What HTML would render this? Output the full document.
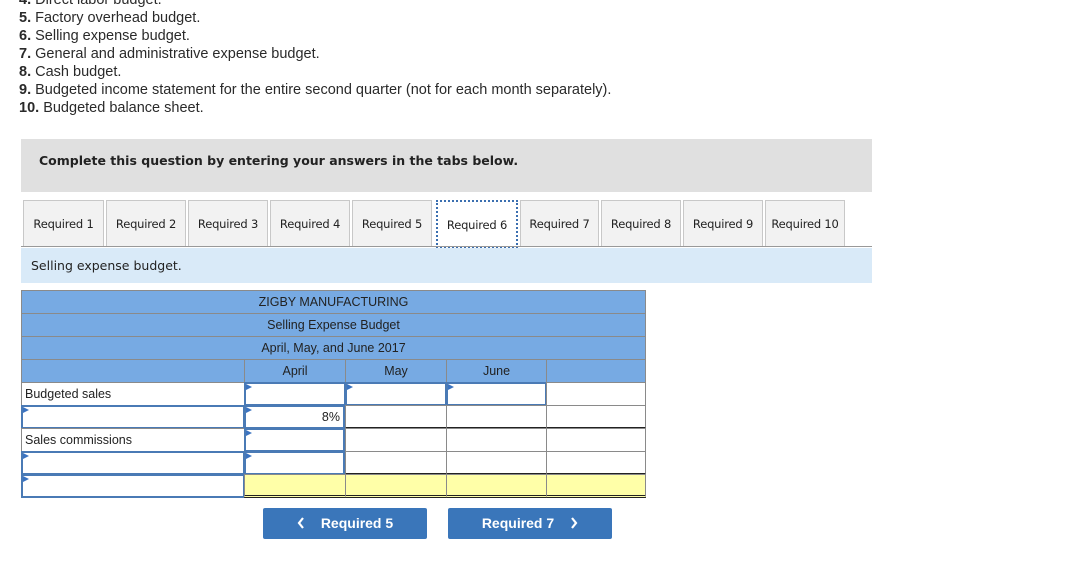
<!DOCTYPE html><html><head><style>
body{margin:0;width:1080px;height:583px;background:#fff;position:relative;overflow:hidden;font-family:"Liberation Sans",sans-serif;color:#222}
.a{position:absolute}
.ln{position:absolute;left:19px;font-size:14.5px;line-height:18px;white-space:nowrap;color:#2a2a2a}
.ln b{font-weight:bold}
.tab{position:absolute;top:200px;height:46px;background:#f2f2f2;border:1px solid #c8c8c8;border-bottom:none;font-family:"DejaVu Sans",sans-serif;font-size:11.5px;line-height:46px;text-align:center;box-sizing:border-box;letter-spacing:-0.2px}
.c{position:absolute;box-sizing:border-box;font-family:"Liberation Sans",sans-serif;font-size:12.5px}
.h{background:#77aae3;border:1px solid #8a8a8a;text-align:center;line-height:22px;color:#222}
.w{background:#fff;border:1px solid #8a8a8a}
.in{border:2px solid #4a7ab5;background:#fff}
.in:before{content:"";position:absolute;left:0;top:0;border-left:6px solid #3b73c0;border-top:3px solid transparent;border-bottom:3px solid transparent}
.y{background:#ffffa8;border:1px solid #8a8a8a;border-bottom:3px double #222}
.btn{position:absolute;top:508px;height:31px;width:164px;background:#3a76ba;border-radius:2px;color:#fff;font-weight:bold;font-size:14px;line-height:31px;text-align:center}
.btn svg{vertical-align:-1px}
</style></head><body>
<div class="ln" style="top:-9px"><b>4.</b> Direct labor budget.</div>
<div class="ln" style="top:9px"><b>5.</b> Factory overhead budget.</div>
<div class="ln" style="top:27px"><b>6.</b> Selling expense budget.</div>
<div class="ln" style="top:45px"><b>7.</b> General and administrative expense budget.</div>
<div class="ln" style="top:63px"><b>8.</b> Cash budget.</div>
<div class="ln" style="top:81px"><b>9.</b> Budgeted income statement for the entire second quarter (not for each month separately).</div>
<div class="ln" style="top:99px"><b>10.</b> Budgeted balance sheet.</div>

<div class="a" style="left:21px;top:139px;width:851px;height:53px;background:#e0e0e0"></div>
<div class="a" style="left:39px;top:153px;font-family:'DejaVu Sans',sans-serif;font-weight:bold;font-size:12.5px">Complete this question by entering your answers in the tabs below.</div>

<div class="tab" style="left:23px;width:81px">Required 1</div>
<div class="tab" style="left:106px;width:80px">Required 2</div>
<div class="tab" style="left:188px;width:80px">Required 3</div>
<div class="tab" style="left:270px;width:80px">Required 4</div>
<div class="tab" style="left:352px;width:80px">Required 5</div>
<div class="tab" style="left:436px;width:82px;background:#fff;border:2px dotted #3b6fb0;height:48px;line-height:46px">Required 6</div>
<div class="tab" style="left:520px;width:79px">Required 7</div>
<div class="tab" style="left:601px;width:80px">Required 8</div>
<div class="tab" style="left:683px;width:80px">Required 9</div>
<div class="tab" style="left:765px;width:80px">Required 10</div>
<div class="a" style="left:21px;top:246px;width:851px;height:1px;background:#999"></div>
<div class="a" style="left:21px;top:248px;width:851px;height:35px;background:#d9eaf8"></div>
<div class="a" style="left:31px;top:258px;font-family:'DejaVu Sans',sans-serif;font-size:12.5px">Selling expense budget.</div>

<div class="c h" style="left:21px;top:290px;width:625px;height:24px">ZIGBY MANUFACTURING</div>
<div class="c h" style="left:21px;top:313px;width:625px;height:24px">Selling Expense Budget</div>
<div class="c h" style="left:21px;top:336px;width:625px;height:24px">April, May, and June 2017</div>
<div class="c h" style="left:21px;top:359px;width:224px;height:24px"></div>
<div class="c h" style="left:244px;top:359px;width:102px;height:24px">April</div>
<div class="c h" style="left:345px;top:359px;width:102px;height:24px">May</div>
<div class="c h" style="left:446px;top:359px;width:101px;height:24px">June</div>
<div class="c h" style="left:546px;top:359px;width:100px;height:24px"></div>

<div class="c w" style="left:21px;top:382px;width:224px;height:24px;line-height:22px;padding-left:3px">Budgeted sales</div>
<div class="c in" style="left:244px;top:382px;width:102px;height:24px"></div>
<div class="c in" style="left:345px;top:382px;width:102px;height:24px"></div>
<div class="c in" style="left:446px;top:382px;width:101px;height:24px"></div>
<div class="c w" style="left:546px;top:382px;width:100px;height:24px"></div>

<div class="c in" style="left:21px;top:405px;width:224px;height:24px"></div>
<div class="c in" style="left:244px;top:405px;width:101px;height:24px;text-align:right;line-height:20px;padding-right:3px">8%</div>
<div class="c w" style="left:345px;top:405px;width:102px;height:24px;border-bottom:2px solid #222"></div>
<div class="c w" style="left:446px;top:405px;width:101px;height:24px;border-bottom:2px solid #222"></div>
<div class="c w" style="left:546px;top:405px;width:100px;height:24px;border-bottom:2px solid #222"></div>

<div class="c w" style="left:21px;top:428px;width:224px;height:24px;line-height:22px;padding-left:3px">Sales commissions</div>
<div class="c in" style="left:244px;top:428px;width:101px;height:24px"></div>
<div class="c w" style="left:345px;top:428px;width:102px;height:24px"></div>
<div class="c w" style="left:446px;top:428px;width:101px;height:24px"></div>
<div class="c w" style="left:546px;top:428px;width:100px;height:24px"></div>

<div class="c in" style="left:21px;top:451px;width:224px;height:24px"></div>
<div class="c in" style="left:244px;top:451px;width:101px;height:24px"></div>
<div class="c w" style="left:345px;top:451px;width:102px;height:24px;border-bottom:2px solid #222"></div>
<div class="c w" style="left:446px;top:451px;width:101px;height:24px;border-bottom:2px solid #222"></div>
<div class="c w" style="left:546px;top:451px;width:100px;height:24px;border-bottom:2px solid #222"></div>

<div class="c in" style="left:21px;top:474px;width:224px;height:24px"></div>
<div class="c y" style="left:244px;top:474px;width:102px;height:24px"></div>
<div class="c y" style="left:345px;top:474px;width:102px;height:24px"></div>
<div class="c y" style="left:446px;top:474px;width:101px;height:24px"></div>
<div class="c y" style="left:546px;top:474px;width:100px;height:24px"></div>

<div class="btn" style="left:263px"><svg width="8" height="12" style="margin-right:16px"><path d="M6 1L2 6L6 11" stroke="#fff" stroke-width="2.2" fill="none"/></svg>Required 5</div>
<div class="btn" style="left:448px">Required 7<svg width="8" height="12" style="margin-left:16px"><path d="M2 1L6 6L2 11" stroke="#fff" stroke-width="2.2" fill="none"/></svg></div>
</body></html>
